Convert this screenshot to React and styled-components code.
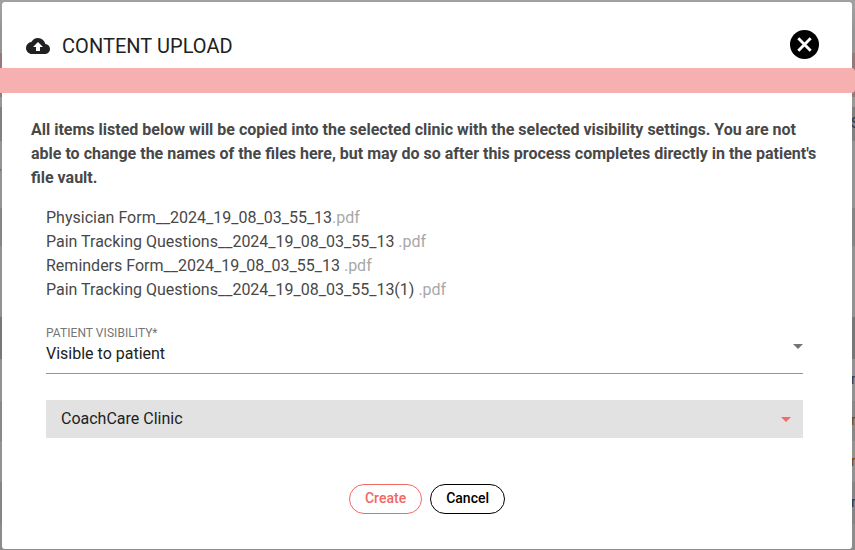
import styled, { createGlobalStyle } from "styled-components";
import { MdCloudUpload } from "react-icons/md";

const GlobalStyle = createGlobalStyle`
    * {
        box-sizing: border-box;
    }

    body {
        margin: 0;
        background: #949494;
        font-family: Roboto, "Liberation Sans", sans-serif;
        overflow: hidden;
    }
`

const Backdrop = styled.div`
    position: relative;
    height: 550px;
    padding: 2px 3px 1px 2px;
    overflow: hidden;
    background: linear-gradient(
        #a0a0a0 0 8px, #949494 30px 53px, #98797a 53px 97px, #989898 97px 107px,
        #808080 107px 141px, #949494 141px 208px, #858585 208px 246px,
        #929292 246px 317px, #777 317px 359px, #929292 359px 401px,
        #888 401px 441px, #929292 441px 482px, #858585 482px 524px, #8c8c8c 524px
    );
`

const PageText = styled.span`
    position: absolute;
    top: ${({ $top }) => $top}px;
    left: ${({ $left }) => $left}px;
    color: ${({ $color }) => $color || "#17395a"};
    font-size: 14px;
    line-height: 16px;
`

const Dialog = styled.div`
    position: relative;
    height: 547px;
    background: #fff;
    border-radius: 3px;
`

const Header = styled.header`
    display: flex;
    align-items: center;
    height: 66px;
    padding: 22px 33px 0 24px;
    color: #212121;
`

const Title = styled.h1`
    flex: 1;
    margin: 0 0 0 12px;
    font-size: 20px;
    font-weight: 400;
    letter-spacing: 0.05px;
    line-height: 24px;
    text-transform: uppercase;
`

const CloseButton = styled.button`
    display: flex;
    margin: -3px 0 0;
    padding: 0;
    border: 0;
    background: none;
    cursor: pointer;
`

const Band = styled.div`
    height: 25px;
    margin: 0 -3px 0 -2px;
    background: #f7b0b0;
    border-radius: 0 4px 4px 0;
`

const Content = styled.div`
    padding: 25px 29px 0;
    color: #484848;
    font-size: 16px;
    line-height: 24px;
`

const Notice = styled.p`
    margin: 0;
    font-weight: 700;
`

const Form = styled.div`
    padding: 16px 20px 0 15px;
`

const FileList = styled.ul`
    margin: 0;
    padding: 0;
    list-style: none;
`

const FileItem = styled.li`
    white-space: pre;
`

const Extension = styled.span`
    color: #a8a8a8;
`

const Field = styled.div`
    display: flex;
    align-items: flex-start;
    height: 49px;
    margin-top: 23px;
    border-bottom: 1px solid #949494;
`

const FieldText = styled.div`
    flex: 1;
`

const Label = styled.div`
    color: #757575;
    font-size: 12px;
    letter-spacing: 0.06px;
    line-height: 16px;
`

const Value = styled.div`
    margin-top: 1px;
    color: #212121;
    line-height: 24px;
`

const ClinicSelect = styled.div`
    display: flex;
    align-items: center;
    justify-content: space-between;
    height: 38px;
    margin-top: 26px;
    padding: 0 12px 0 15px;
    background: #e2e2e2;
    color: #212121;
`

const Arrow = styled.span`
    border: 5px solid transparent;
    border-top-color: ${({ $color }) => $color};
    border-bottom: 0;
`

const FieldArrow = styled(Arrow)`
    margin-top: 19px;
`

const Actions = styled.footer`
    display: flex;
    justify-content: center;
    gap: 8px;
    margin-top: 46px;
`

const Button = styled.button`
    height: 30px;
    padding: 0 15px 2px;
    border: 1px solid ${({ $color }) => $color};
    border-radius: 15px;
    background: #fff;
    color: ${({ $color }) => $color};
    font-family: inherit;
    font-size: 14px;
    font-weight: 500;
    cursor: pointer;
`

const files = [
    { name: "Physician Form__2024_19_08_03_55_13", extension: ".pdf" },
    { name: "Pain Tracking Questions__2024_19_08_03_55_13 ", extension: ".pdf" },
    { name: "Reminders Form__2024_19_08_03_55_13 ", extension: ".pdf" },
    { name: "Pain Tracking Questions__2024_19_08_03_55_13(1) ", extension: ".pdf" },
];

const CloseIcon = () => (
    <svg width="29" height="29" viewBox="0 0 29 29" aria-hidden="true">
        <circle cx="14.5" cy="14.5" r="14.5" fill="#000" />
        <path d="M8.3 8.3l12.4 12.4M20.7 8.3l-12.4 12.4" stroke="#fff" strokeWidth="2.9" />
    </svg>
);

export default function App() {
    return (
        <Backdrop>
            <GlobalStyle />
            <PageText $top={164} $left={-6}>v</PageText>
            <PageText $top={115} $left={851}>S</PageText>
            <PageText $top={371} $left={851}>n</PageText>
            <PageText $top={412} $left={851} $color="#70481c">r</PageText>
            <PageText $top={453} $left={851} $color="#70481c">r</PageText>
            <PageText $top={494} $left={851}>n</PageText>
            <Dialog role="dialog">
                <Header>
                    <MdCloudUpload size={24} />
                    <Title>Content Upload</Title>
                    <CloseButton aria-label="Close">
                        <CloseIcon />
                    </CloseButton>
                </Header>
                <Band />
                <Content>
                    <Notice>
                        All items listed below will be copied into the selected clinic with the selected
                        visibility settings. You are not able to change the names of the files here, but
                        may do so after this process completes directly in the patient's file vault.
                    </Notice>
                    <Form>
                        <FileList>
                            {files.map(({ name, extension }) => (
                                <FileItem key={name}>
                                    {name}
                                    <Extension>{extension}</Extension>
                                </FileItem>
                            ))}
                        </FileList>
                        <Field>
                            <FieldText>
                                <Label>PATIENT VISIBILITY*</Label>
                                <Value>Visible to patient</Value>
                            </FieldText>
                            <FieldArrow $color="#757575" />
                        </Field>
                        <ClinicSelect>
                            CoachCare Clinic
                            <Arrow $color="#f5695f" />
                        </ClinicSelect>
                    </Form>
                </Content>
                <Actions>
                    <Button $color="#f16862">Create</Button>
                    <Button $color="#000">Cancel</Button>
                </Actions>
            </Dialog>
        </Backdrop>
    );
}
